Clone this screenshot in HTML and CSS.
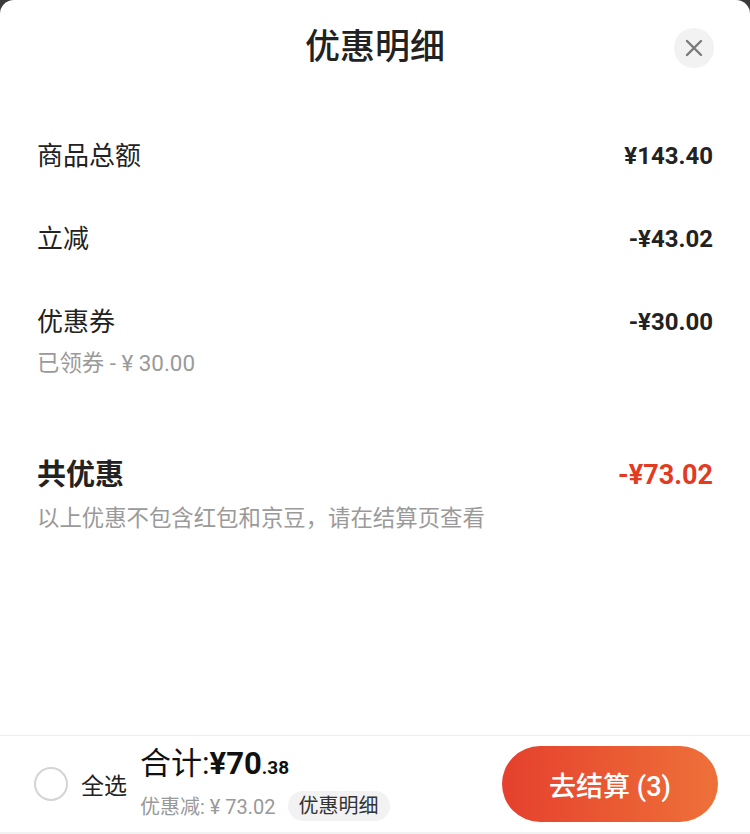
FILE: index.html
```html
<!DOCTYPE html>
<html lang="zh-CN">
<head>
  <meta charset="UTF-8" />
  <meta name="viewport" content="width=device-width, initial-scale=1.0"/>
  <title>优惠明细</title>
  <link rel="stylesheet" href="styles.css">
</head>
<body>

  <div class="sheet">

    <!-- Header -->
    <header class="sheet-head">
      <h1>优惠明细</h1>
      <button class="close-btn" aria-label="关闭">
        <svg width="18" height="18" viewBox="0 0 18 18">
          <path d="M2 2 L16 16 M16 2 L2 16" stroke="#7a7a7a" stroke-width="2.4" stroke-linecap="round"/>
        </svg>
      </button>
    </header>

    <!-- Discount rows -->
    <section class="detail-list">
      <div class="row">
        <span class="label">商品总额</span>
        <span class="amount">¥143.40</span>
      </div>
      <div class="row">
        <span class="label">立减</span>
        <span class="amount">-¥43.02</span>
      </div>
      <div class="row row-sub">
        <span class="label">优惠券</span>
        <span class="amount">-¥30.00</span>
      </div>
      <div class="sub-note">已领券 - ¥ 30.00</div>

      <div class="row total-row">
        <span class="label">共优惠</span>
        <span class="amount red">-¥73.02</span>
      </div>
      <div class="sub-note">以上优惠不包含红包和京豆，请在结算页查看</div>
    </section>

    <div class="spacer"></div>

    <!-- Checkout bar -->
    <footer class="checkout-bar">
      <span class="radio"></span>
      <span class="select-all">全选</span>
      <div class="sum">
        <div class="sum-line">合计:<b>¥70</b><small>.38</small></div>
        <div class="sum-sub">
          <span class="saved">优惠减: ¥ 73.02</span>
          <span class="detail-pill">优惠明细</span>
        </div>
      </div>
      <button class="pay-btn">去结算 (3)</button>
    </footer>

  </div>

</body>
</html>
```

FILE: styles.css
```css
* {
  box-sizing: border-box;
}
html, body {
  height: 100%;
}
body {
  margin: 0;
  background: #3a3a3a;
  font-family: Roboto, "Noto Sans CJK SC", sans-serif;
  color: #222;
}

.sheet {
  height: 100%;
  background: #fff;
  border-radius: 14px 14px 0 0;
  display: flex;
  flex-direction: column;
}

/* Header */
.sheet-head {
  position: relative;
  height: 96px;
  display: flex;
  justify-content: center;
  align-items: center;
}

.sheet-head h1 {
  margin: 0 0 2px;
  font-size: 35px;
  font-weight: 500;
  line-height: 1;
  color: #222;
}

.close-btn {
  position: absolute;
  top: 28px;
  right: 36px;
  width: 40px;
  height: 40px;
  border: none;
  border-radius: 50%;
  background: #f2f2f2;
  display: flex;
  align-items: center;
  justify-content: center;
  padding: 0;
}

/* Rows */
.detail-list {
  padding: 42px 37px 0;
}

.row {
  display: flex;
  justify-content: space-between;
  align-items: center;
  height: 36px;
  margin-bottom: 47px;
}

.row .label {
  font-size: 26px;
  line-height: 36px;
}

.row .amount {
  font-size: 24px;
  font-weight: 700;
  line-height: 36px;
}

.row-sub {
  margin-bottom: 8px;
}

.sub-note {
  font-size: 22.4px;
  line-height: 30px;
  color: #9a9a9a;
}

.total-row {
  height: 40px;
  margin: 77px 0 8px;
}

.total-row .label {
  font-size: 29px;
  font-weight: 700;
}

.total-row .amount {
  font-size: 27px;
}

.red {
  color: #e33a22;
}

.spacer {
  flex: 1;
}

/* Checkout bar */
.checkout-bar {
  height: 99px;
  border-top: 1px solid #eee;
  border-bottom: 2px solid #f2f2f2;
  display: flex;
  align-items: center;
  padding: 0 32px 0 34px;
}

.radio {
  width: 34px;
  height: 34px;
  border: 2px solid #d4d4d4;
  border-radius: 50%;
  flex-shrink: 0;
}

.select-all {
  margin-left: 13px;
  font-size: 23px;
  color: #222;
}

.sum {
  margin-left: 13px;
  display: flex;
  flex-direction: column;
  gap: 5px;
  padding-bottom: 2px;
}

.sum-line {
  font-size: 31px;
  line-height: 36px;
  color: #111;
}

.sum-line b {
  font-weight: 700;
}

.sum-line small {
  font-size: 19px;
  font-weight: 700;
}

.sum-sub {
  display: flex;
  align-items: center;
  gap: 12px;
}

.saved {
  font-size: 20px;
  color: #999;
}

.detail-pill {
  background: #f2f2f2;
  border-radius: 15px;
  padding: 0 11px;
  height: 30px;
  line-height: 30px;
  font-size: 20px;
  color: #333;
}

.pay-btn {
  margin-left: auto;
  width: 216px;
  height: 76px;
  border: none;
  border-radius: 38px;
  background: linear-gradient(90deg, #e5402d, #ee7139);
  color: #fff;
  font-family: inherit;
  font-size: 27px;
  font-weight: 500;
}
```
